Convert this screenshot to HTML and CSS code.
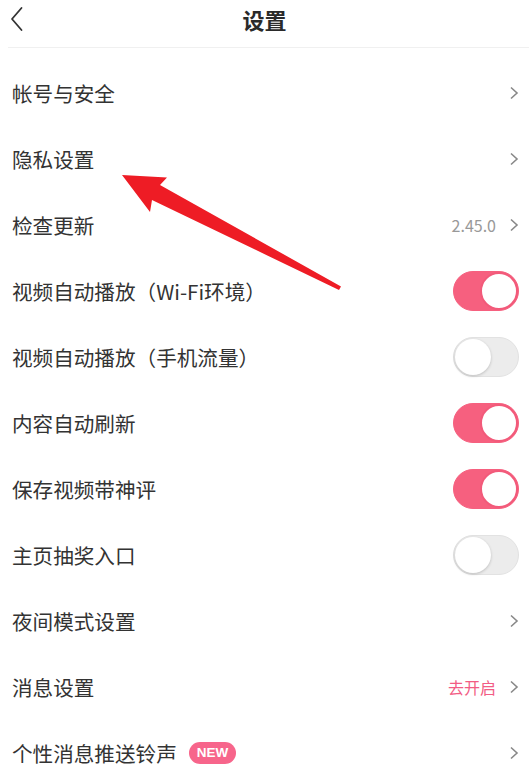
FILE: index.html
```html
<!DOCTYPE html>
<html lang="zh">
<head>
<meta charset="utf-8">
<title>设置</title>
<link rel="stylesheet" href="styles.css">
</head>
<body>
<div class="page">
  <header class="header">
    <svg class="back" width="14" height="26" viewBox="0 0 14 26"><path d="M11.5 2 L2 13 L11.5 24" fill="none" stroke="#333" stroke-width="1.8" stroke-linejoin="round" stroke-linecap="round"/></svg>
    <h1 class="title">设置</h1>
  </header>
  <ul class="list">
    <li class="row"><span class="label">帐号与安全</span><span class="right"><svg class="chev" width="10" height="14" viewBox="0 0 10 14"><path d="M2 1.5 L8 7 L2 12.5" fill="none" stroke="#888" stroke-width="1.6"/></svg></span></li>
    <li class="row"><span class="label">隐私设置</span><span class="right"><svg class="chev" width="10" height="14" viewBox="0 0 10 14"><path d="M2 1.5 L8 7 L2 12.5" fill="none" stroke="#888" stroke-width="1.6"/></svg></span></li>
    <li class="row"><span class="label">检查更新</span><span class="right"><span class="value">2.45.0</span><svg class="chev" width="10" height="14" viewBox="0 0 10 14"><path d="M2 1.5 L8 7 L2 12.5" fill="none" stroke="#888" stroke-width="1.6"/></svg></span></li>
    <li class="row"><span class="label">视频自动播放（Wi-Fi环境）</span><span class="switch on"><span class="knob"></span></span></li>
    <li class="row"><span class="label">视频自动播放（手机流量）</span><span class="switch"><span class="knob"></span></span></li>
    <li class="row"><span class="label">内容自动刷新</span><span class="switch on"><span class="knob"></span></span></li>
    <li class="row"><span class="label">保存视频带神评</span><span class="switch on"><span class="knob"></span></span></li>
    <li class="row"><span class="label">主页抽奖入口</span><span class="switch"><span class="knob"></span></span></li>
    <li class="row"><span class="label">夜间模式设置</span><span class="right"><svg class="chev" width="10" height="14" viewBox="0 0 10 14"><path d="M2 1.5 L8 7 L2 12.5" fill="none" stroke="#888" stroke-width="1.6"/></svg></span></li>
    <li class="row"><span class="label">消息设置</span><span class="right"><span class="value pink">去开启</span><svg class="chev" width="10" height="14" viewBox="0 0 10 14"><path d="M2 1.5 L8 7 L2 12.5" fill="none" stroke="#888" stroke-width="1.6"/></svg></span></li>
    <li class="row"><span class="label">个性消息推送铃声<span class="badge">NEW</span></span><span class="right"><svg class="chev" width="10" height="14" viewBox="0 0 10 14"><path d="M2 1.5 L8 7 L2 12.5" fill="none" stroke="#888" stroke-width="1.6"/></svg></span></li>
  </ul>
  <svg class="arrow" width="529" height="780" viewBox="0 0 529 780"><polygon points="122,175 167,177.5 160,185 341,286.5 339,290 152,200 150,212" fill="#ee1c25"/></svg>
</div>
</body>
</html>
```
FILE: styles.css
```css
* { box-sizing: border-box; }
html, body { margin: 0; padding: 0; background: #fff; }
body {
  font-family: "Noto Sans CJK SC", "Noto Sans", sans-serif;
  color: #333;
  width: 529px;
  height: 780px;
  overflow: hidden;
}
.page { position: relative; width: 529px; height: 780px; }
.header {
  height: 48px;
  display: flex;
  align-items: center;
  justify-content: center;
  position: relative;
  border-bottom: 1px solid #f0f0f0;
  margin-left: 8px;
}
.back { position: absolute; left: 2px; top: 6px; }
.title {
  margin: 0;
  font-size: 22px;
  font-weight: 700;
  color: #2a2a2a;
  margin-left: -8px;
  margin-top: -9px;
}
.list { list-style: none; margin: 0; padding: 12px 0 0 0; }
.row {
  height: 66px;
  display: flex;
  align-items: center;
  justify-content: space-between;
  padding: 0 10px 0 12px;
}
.label {
  font-size: 20.6px;
  display: flex;
  align-items: center;
  color: #333;
}
.right { display: flex; align-items: center; }
.value { font-size: 16px; color: #999; margin-right: 13px; }
.value.pink { color: #f25c84; }
.chev { display: block; }
.badge {
  margin-left: 12px;
  height: 22px;
  padding: 0 8px;
  border-radius: 11px;
  background: #f7658b;
  color: #fff;
  font-family: "Liberation Sans", Arial, sans-serif;
  font-weight: 700;
  font-size: 13.5px;
  line-height: 22px;
}
.switch {
  width: 66px;
  height: 40px;
  border-radius: 20px;
  background: #ececec;
  border: 1px solid #e2e2e2;
  display: flex;
  align-items: center;
  padding: 1px;
}
.switch .knob {
  width: 36px;
  height: 36px;
  border-radius: 50%;
  background: #fff;
  box-shadow: 0 1px 3px rgba(0,0,0,0.2);
}
.switch.on {
  background: #f6607f;
  border-color: #f6607f;
  justify-content: flex-end;
}
.switch.on .knob {
  box-shadow: none;
  border: 2px solid #f25a7a;
  width: 38px;
  height: 38px;
  margin-right: -1px;
}
.arrow { position: absolute; left: 0; top: 0; pointer-events: none; }
```
